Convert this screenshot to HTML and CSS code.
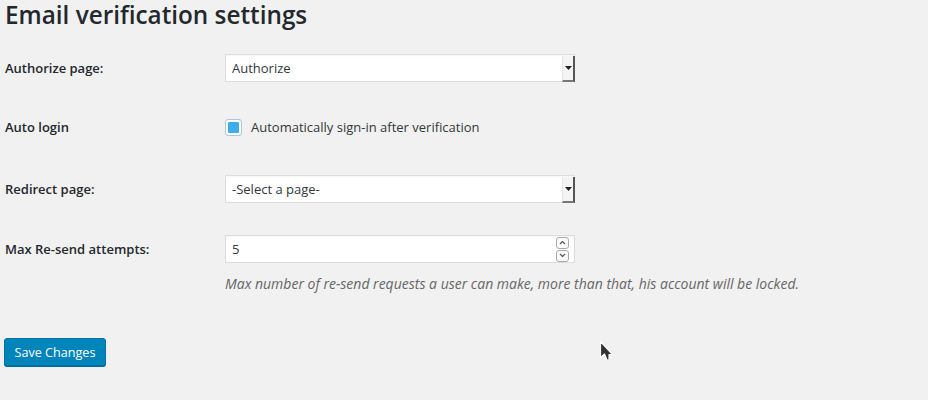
FILE: index.html
```html
<!DOCTYPE html>
<html>
<head>
<meta charset="utf-8">
<link rel="stylesheet" href="styles.css">
</head>
<body>
<div class="wrap">
  <h1 class="title">Email verification settings</h1>
  <div class="form">
    <div class="row row-1">
      <div class="label">Authorize page:</div>
      <div class="field">
        <div class="select"><span class="select-text">Authorize</span><span class="select-btn"><svg width="7" height="4" viewBox="0 0 7 4"><path d="M0 0h7L3.5 4z" fill="#222"/></svg></span></div>
      </div>
    </div>
    <div class="row row-2">
      <div class="label">Auto login</div>
      <div class="field check-field">
        <span class="checkbox"><span class="check-fill"></span></span>
        <span class="check-label">Automatically sign-in after verification</span>
      </div>
    </div>
    <div class="row row-3">
      <div class="label">Redirect page:</div>
      <div class="field">
        <div class="select"><span class="select-text">-Select a page-</span><span class="select-btn"><svg width="7" height="4" viewBox="0 0 7 4"><path d="M0 0h7L3.5 4z" fill="#222"/></svg></span></div>
      </div>
    </div>
    <div class="row row-4">
      <div class="label">Max Re-send attempts:</div>
      <div class="field">
        <div class="number"><span class="number-text">5</span>
          <span class="spin">
            <span class="spin-btn"><svg width="7" height="5" viewBox="0 0 7 5"><path d="M1 4L3.5 1.5L6 4" fill="none" stroke="#555" stroke-width="1.2"/></svg></span>
            <span class="spin-btn"><svg width="7" height="5" viewBox="0 0 7 5"><path d="M1 1L3.5 3.5L6 1" fill="none" stroke="#555" stroke-width="1.2"/></svg></span>
          </span>
        </div>
      </div>
    </div>
    <p class="description">Max number of re-send requests a user can make, more than that, his account will be locked.</p>
    <div class="submit">
      <button class="button">Save Changes</button>
    </div>
  </div>
  <svg class="cursor" width="14" height="22" viewBox="0 0 14 22"><path d="M1.5 1.5V17.5L5.5 14L8 20H10L10 14.5H13.5Z" fill="#333" stroke="#fff" stroke-width="1.2" stroke-linejoin="round"/></svg>
</div>
</body>
</html>
```
FILE: styles.css
```css
html, body {
  margin: 0;
  padding: 0;
  background: #f1f1f1;
}
body {
  font-family: "Open Sans", "Noto Sans", sans-serif;
  color: #23282d;
  width: 928px;
  height: 400px;
  overflow: hidden;
}
.wrap {
  position: relative;
  padding-left: 5px;
  height: 400px;
}
.title {
  margin: 0;
  font-size: 24.3px;
  line-height: 30px;
  font-weight: 600;
  color: #23282d;
}
.form {
  margin-top: 24px;
}
.row {
  display: flex;
  align-items: center;
}
.label {
  width: 220px;
  font-size: 13px;
  font-weight: 600;
  color: #23282d;
}
.field {
  display: flex;
  align-items: center;
}
.row-1 { height: 28px; }
.row-2 { height: 16px; margin-top: 37px; }
.row-3 { height: 28px; margin-top: 40px; }
.row-4 { height: 28px; margin-top: 32px; }
.select, .number {
  box-sizing: border-box;
  width: 350px;
  height: 28px;
  background: #fff;
  border: 1px solid #ddd;
  display: flex;
  align-items: center;
  justify-content: space-between;
  font-size: 13px;
  color: #32373c;
  box-shadow: inset 0 1px 2px rgba(0,0,0,0.04);
}
.select-text, .number-text {
  padding-left: 6px;
}
.select-btn {
  box-sizing: border-box;
  width: 13px;
  height: 26px;
  margin-right: -1px;
  margin-top: 1px;
  display: flex;
  align-items: center;
  justify-content: center;
  background: #f4f4f4;
  border-left: 1px solid #e8e8e8;
  border-right: 2px solid #555;
  border-bottom: 2px solid #777;
}
.spin {
  display: flex;
  flex-direction: column;
  gap: 1px;
  margin-right: 5px;
}
.spin-btn {
  box-sizing: border-box;
  width: 13px;
  height: 12px;
  border: 1px solid #aaa;
  border-radius: 3px;
  background: #fafafa;
  display: flex;
  align-items: center;
  justify-content: center;
}
.check-field {
  gap: 9px;
}
.checkbox {
  box-sizing: border-box;
  width: 17px;
  height: 17px;
  border: 1px solid #a9c8de;
  border-radius: 3px;
  background: #fff;
  display: flex;
  align-items: center;
  justify-content: center;
}
.check-fill {
  width: 11px;
  height: 11px;
  background: #3daee9;
  border-radius: 1px;
}
.check-label {
  font-size: 13px;
  color: #32373c;
}
.description {
  margin: 12px 0 0 220px;
  font-size: 14px;
  line-height: 18px;
  font-style: italic;
  color: #666;
}
.submit {
  margin-top: 45px;
}
.button {
  box-sizing: border-box;
  margin-left: -1px;
  width: 102px;
  height: 28px;
  background: #0085ba;
  border: 1px solid #0073aa;
  border-radius: 3px;
  box-shadow: 0 1px 0 #006799;
  color: #fff;
  font-family: "Open Sans", "Noto Sans", sans-serif;
  font-size: 12.6px;
  padding: 0;
}
.cursor {
  position: absolute;
  left: 599px;
  top: 340px;
}
```
